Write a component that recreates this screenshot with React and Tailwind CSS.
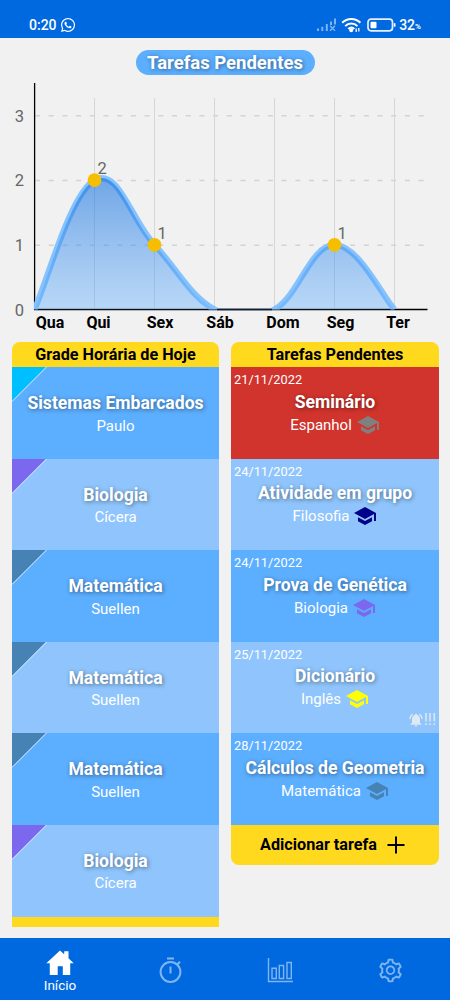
import React from "react";
import { MdSchool, MdNotificationsActive } from "react-icons/md";
import { AiOutlineSetting } from "react-icons/ai";
import { FaWhatsapp } from "react-icons/fa";

const classes = [
  { name: "Sistemas Embarcados", teacher: "Paulo", corner: "fill-[#00bfff]" },
  { name: "Biologia", teacher: "Cícera", corner: "fill-[#7b68ee]" },
  { name: "Matemática", teacher: "Suellen", corner: "fill-[#4682b4]" },
  { name: "Matemática", teacher: "Suellen", corner: "fill-[#4682b4]" },
  { name: "Matemática", teacher: "Suellen", corner: "fill-[#4682b4]" },
  { name: "Biologia", teacher: "Cícera", corner: "fill-[#7b68ee]" },
];

const tasks = [
  { date: "21/11/2022", title: "Seminário", subject: "Espanhol", cap: "text-[#808080]", bg: "bg-[#d0342c]" },
  { date: "24/11/2022", title: "Atividade em grupo", subject: "Filosofia", cap: "text-[#00008b]", bg: "bg-[#8fc5fc]" },
  { date: "24/11/2022", title: "Prova de Genética", subject: "Biologia", cap: "text-[#7b68ee]", bg: "bg-[#5caeff]" },
  { date: "25/11/2022", title: "Dicionário", subject: "Inglês", cap: "text-[#ffff00]", bg: "bg-[#8fc5fc]", alert: true },
  { date: "28/11/2022", title: "Cálculos de Geometria", subject: "Matemática", cap: "text-[#4682b4]", bg: "bg-[#5caeff]" },
];

const days = [
  ["Qua", 50], ["Qui", 98.5], ["Sex", 160], ["Sáb", 220], ["Dom", 283], ["Seg", 340.5], ["Ter", 398],
];
const values = [0, 2, 1, 0, 0, 1, 0];
const points = values.map((v, i) => [34.5 + 60 * i, 309.5 - 64.7 * v]);

function curve(p) {
  let d = `M${p[0][0]} ${p[0][1]}`;
  for (let i = 1; i < p.length; i++) {
    const a = p[i - 2] || p[i - 1];
    const b = p[i - 1];
    const c = p[i];
    const e = p[i + 1] || c;
    d += ` C${b[0] + (c[0] - a[0]) * 0.2} ${b[1] + (c[1] - a[1]) * 0.2} ${c[0] - (e[0] - b[0]) * 0.2} ${c[1] - (e[1] - b[1]) * 0.2} ${c[0]} ${c[1]}`;
  }
  return d;
}

const titleShadow = "[text-shadow:1px_1px_4px_rgba(0,0,0,0.45)]";

function StatusBar() {
  return (
    <header className="flex h-[38px] shrink-0 items-start justify-between bg-[#0069e0] pt-[15px] pl-[29px] pr-[29px] text-white">
      <div className="flex h-5 items-center gap-[3px]">
        <span className="text-[14px] font-medium leading-5">0:20</span>
        <FaWhatsapp className="size-4" />
      </div>
      <div className="flex h-5 items-center">
        <svg className="mr-[5px] h-[14px] w-5" viewBox="0 0 20 14" stroke="#7db3f0" strokeWidth="2" fill="none">
          <path d="M2 10.500V13M6.300 8.800V13M10.800 6V13M15 3.500V7M19 .5V6.500" />
          <path d="M14 7.800l5 5M19 7.800l-5 5" strokeWidth="1.500" />
        </svg>
        <svg className="mr-[5px] h-4 w-[21px]" viewBox="0 0 21 16" fill="none" stroke="white" strokeWidth="2">
          <path d="M1.200 5.800C6.200.6 14.400.6 19.400 5.800M4.200 9.100c3.300-3.500 8.900-3.500 12.200 0M7.300 12c1.900-2 4.200-2 6 0" />
          <circle cx="10.200" cy="13.300" r="1" fill="white" />
          <path d="M15.200 11.500v3.500M17.800 11v3.500" strokeWidth="1.300" />
        </svg>
        <svg className="mr-[3px] h-[14px] w-[29px]" viewBox="0 0 29 14" fill="none">
          <rect x="1" y="1.200" width="24.500" height="11.600" rx="3" stroke="#e6f0fc" strokeWidth="1.700" />
          <rect x="3.500" y="3.800" width="6" height="6.500" rx="1" fill="white" />
          <path d="M27.600 5.200v3.500" stroke="white" strokeWidth="1.700" />
        </svg>
        <span className="text-[14px] font-medium leading-5">32</span>
        <span className="pt-[3px] text-[8px] font-bold">%</span>
      </div>
    </header>
  );
}

function Chart() {
  const line = curve(points);
  return (
    <svg className="block h-[264px] w-full" viewBox="0 76 450 264" fontFamily="Roboto, sans-serif">
      <defs>
        <linearGradient id="area" gradientUnits="userSpaceOnUse" x1="0" y1="177" x2="0" y2="309">
          <stop offset="0" stopColor="#0064dc" stopOpacity="0.54" />
          <stop offset="1" stopColor="#5eadff" stopOpacity="0.39" />
        </linearGradient>
        <clipPath id="plot"><rect x="34" y="76" width="394" height="233.500" /></clipPath>
      </defs>
      {[1, 2, 3].map((v) => (
        <path key={v} d={`M35 ${309.900 - 64.700 * v}H427`} stroke="#d3d3d3" strokeWidth="1.400" strokeDasharray="5 8.700" />
      ))}
      {points.slice(1).map(([x]) => (
        <path key={x} d={`M${x} 98V309`} stroke="#d6d6d6" strokeWidth="1" />
      ))}
      <path d="M34.600 83V310M34 309.500H427.500" stroke="#000" strokeWidth="1.300" />
      <g clipPath="url(#plot)">
        <path d={line} fill="none" stroke="#86c2fc" strokeWidth="6" />
        <path d={`${line} L34.500 309.500Z`} fill="url(#area)" />
      </g>
      <path d="M217 309.500H272" stroke="#0a1c38" strokeWidth="1.300" />
      {[0, 1, 2, 3].map((v) => (
        <text key={v} x="19.300" y={316 - 64.800 * v} textAnchor="middle" fontSize="16.500" fill="#666">{v}</text>
      ))}
      {points.map(([x, y], i) => values[i] > 0 && (
        <g key={x}>
          <circle cx={x} cy={y} r="6.900" fill="#f6be00" />
          <text x={x + 7.700} y={y - 6} textAnchor="middle" fontSize="16.500" fill="#666">{values[i]}</text>
        </g>
      ))}
      {days.map(([label, x]) => (
        <text key={label} x={x} y="328.300" textAnchor="middle" fontSize="16" fontWeight="700" fill="#000">{label}</text>
      ))}
    </svg>
  );
}

function Schedule() {
  return (
    <section className="flex w-[207px] flex-col overflow-hidden rounded-t-[8px] text-center">
      <h2 className="h-[25px] bg-[#ffd91e] text-[16.200px] font-bold leading-[25px] text-black">Grade Horária de Hoje</h2>
      {classes.map((c, i) => (
        <div key={i} className={`relative h-[91.600px] pt-[25px] text-white ${i % 2 ? "bg-[#8fc5fc]" : "bg-[#5caeff]"}`}>
          <svg className="absolute left-0 top-0 size-[35px]" viewBox="0 0 35 35">
            <path className={c.corner} d="M0 0H34L0 34Z" />
            <path d="M34.500 0L0 34.500" stroke="#d5e9ff" strokeWidth="1" />
          </svg>
          <h3 className={`text-[17.600px] font-bold leading-[23.500px] ${titleShadow}`}>{c.name}</h3>
          <p className="text-[15px] leading-5">{c.teacher}</p>
        </div>
      ))}
      <div className="h-[10.500px] bg-[#ffd91e]" />
    </section>
  );
}

function Tasks() {
  return (
    <section className="flex w-[208px] flex-col overflow-hidden rounded-[8px] text-center">
      <h2 className="h-[25px] bg-[#ffd91e] text-[16.200px] font-bold leading-[25px] text-black">Tarefas Pendentes</h2>
      {tasks.map((t) => (
        <div key={t.title} className={`relative h-[91.600px] pt-[3px] text-white ${t.bg}`}>
          <p className="pl-[3px] text-left text-[12.800px] leading-[19.500px]">{t.date}</p>
          <h3 className={`text-[17.600px] font-bold leading-6 ${titleShadow}`}>{t.title}</h3>
          <div className="flex h-[22px] items-center justify-center gap-1">
            <span className="text-[15px] leading-5">{t.subject}</span>
            <MdSchool className={`size-6 ${t.cap}`} />
          </div>
          {t.alert && (
            <div className="absolute bottom-[3px] right-[3px] flex h-5 items-center text-[#dfe9f3]">
              <MdNotificationsActive className="size-4" />
              <span className="text-[16px] leading-5">!!!</span>
            </div>
          )}
        </div>
      ))}
      <button className="flex h-10 items-center justify-center gap-[10px] bg-[#ffd91e] pr-[5px] text-[16.200px] font-bold text-black">
        Adicionar tarefa
        <svg className="size-[18px]" viewBox="0 0 18 18" stroke="black" strokeWidth="2"><path d="M9 .5v17M.5 9h17" /></svg>
      </button>
    </section>
  );
}

function TabBar() {
  return (
    <nav className="flex h-[62px] shrink-0 justify-around bg-[#0069e0] px-[5px] text-[#80b5f1]">
      <div className="flex w-[110px] flex-col items-center pt-3 text-white">
        <svg className="h-[26px] w-7" viewBox="0 0 28 26" fill="currentColor">
          <path d="M14 .5L18.200 4.300V1.200H22.500V8.300L27.700 13.300H24.200V25H16.800V16.300H11.700V25H3.800V13.300H.3Z" />
        </svg>
        <span className="text-[13.500px] leading-[18px]">Início</span>
      </div>
      <div className="flex w-[110px] justify-center pt-[18px]">
        <svg className="h-7 w-6" viewBox="0 0 24 28" fill="none" stroke="currentColor" strokeWidth="2">
          <circle cx="12.500" cy="16" r="9.900" /><path d="M9 2.500h7M12.500 10.500v7M19.500 8.300l2.500-2.500" />
        </svg>
      </div>
      <div className="flex w-[110px] justify-center pt-5">
        <svg className="h-[26px] w-[26px]" viewBox="0 0 26 26" fill="none" stroke="currentColor" strokeWidth="1.400">
          <path d="M1.500 0V23.500H26M5 10.300h4.300v10.200H5zM12.300 7.500h4.300v13h-4.300zM20 4.500h4.300v16h-4.300z" />
        </svg>
      </div>
      <div className="flex w-[110px] justify-center pt-[19px]">
        <AiOutlineSetting className="size-[27px]" />
      </div>
    </nav>
  );
}

export default function App() {
  return (
    <div className="flex h-[1000px] w-[450px] flex-col overflow-hidden bg-[#f1f1f1] font-['Roboto',sans-serif]">
      <StatusBar />
      <div className="flex h-[38px] shrink-0 justify-center pt-3">
        <h1 className={`h-[25px] w-[179px] rounded-full bg-[#5caeff] text-center text-[18.500px] font-bold leading-[26px] text-white ${titleShadow}`}>Tarefas Pendentes</h1>
      </div>
      <Chart />
      <main className="flex h-[598px] shrink-0 items-start gap-3 pl-3 pt-[2px]">
        <Schedule />
        <Tasks />
      </main>
      <TabBar />
    </div>
  );
}
